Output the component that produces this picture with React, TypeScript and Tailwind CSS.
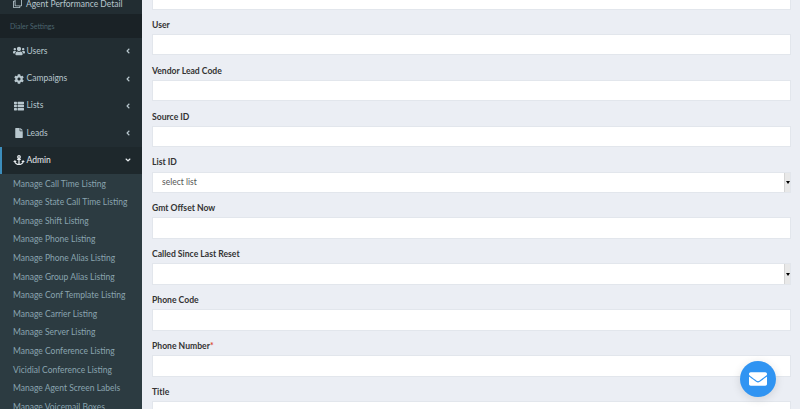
import { FaAngleDown, FaAngleLeft, FaAnchor, FaCog, FaEnvelope, FaFile, FaRegClone, FaThList, FaUsers } from "react-icons/fa";

const menus = [
  { title: "Users", icon: FaUsers },
  { title: "Campaigns", icon: FaCog },
  { title: "Lists", icon: FaThList },
  { title: "Leads", icon: FaFile },
];

const adminLinks = [
  "Manage Call Time Listing",
  "Manage State Call Time Listing",
  "Manage Shift Listing",
  "Manage Phone Listing",
  "Manage Phone Alias Listing",
  "Manage Group Alias Listing",
  "Manage Conf Template Listing",
  "Manage Carrier Listing",
  "Manage Server Listing",
  "Manage Conference Listing",
  "Vicidial Conference Listing",
  "Manage Agent Screen Labels",
  "Manage Voicemail Boxes",
];

const fields = [
  { label: "User" },
  { label: "Vendor Lead Code" },
  { label: "Source ID" },
  { label: "List ID", select: "select list" },
  { label: "Gmt Offset Now" },
  { label: "Called Since Last Reset", select: " " },
  { label: "Phone Code" },
  { label: "Phone Number", required: true },
  { label: "Title" },
];

function Sidebar() {
  return (
    <aside className="w-[142px] shrink-0 bg-[#222d32] h-[409px] overflow-hidden text-[8.5px]">
      <div className="h-[14px] flex items-end pl-[13px] pb-[6px] gap-[4px] text-[#b8c7ce] overflow-hidden">
        <FaRegClone className="text-[9px] shrink-0" />
        <span className="whitespace-nowrap leading-none">Agent Performance Detail</span>
      </div>
      <div className="h-[23.6px] bg-[#1a2226] flex items-center pl-[10px] text-[7px] text-[#4b646f]">Dialer Settings</div>
      {menus.map((m) => (
        <div key={m.title} className="h-[27.3px] flex items-center pl-[13px] pr-[10px] text-[#b8c7ce]">
          <m.icon className="text-[10px] w-[12px] shrink-0" />
          <span className="ml-[1.5px] flex-1">{m.title}</span>
          <FaAngleLeft className="text-[8px]" />
        </div>
      ))}
      <div className="h-[27px] flex items-center pl-[11px] pr-[10px] bg-[#1e282c] border-l-2 border-[#3c8dbc] text-[#e8edf0]">
        <FaAnchor className="text-[10px] w-[12px] shrink-0" />
        <span className="ml-[1.5px] flex-1">Admin</span>
        <FaAngleDown className="text-[8px]" />
      </div>
      <ul className="bg-[#2c3b41] pt-[1px]">
        {adminLinks.map((l) => (
          <li key={l} className="h-[18.6px] pl-[13px] flex items-center text-[#8aa4af] whitespace-nowrap">{l}</li>
        ))}
      </ul>
    </aside>
  );
}

function Field({ label, select, required }: { label: string; select?: string; required?: boolean }) {
  return (
    <div className="h-[45.9px]">
      <div className="h-[24.4px] pt-[7px] flex items-center text-[8.6px] font-bold text-[#333]">
        {label}
        {required && <span className="text-[#dd4b39]">*</span>}
      </div>
      {select ? (
        <div className="h-[21.5px] border border-[#e2e6ec] bg-white flex items-center pl-[9px] text-[8.5px] text-[#555] relative">
          {select}
          <div className="absolute right-0 top-0 bottom-0 w-[6px] bg-[#e8e8e8] border-l border-[#d5d5d5] flex items-center justify-center">
            <div className="w-0 h-0 border-l-[2px] border-r-[2px] border-t-[3px] border-l-transparent border-r-transparent border-t-black" />
          </div>
        </div>
      ) : (
        <div className="h-[21.5px] border border-[#e2e6ec] bg-white" />
      )}
    </div>
  );
}

export default function App() {
  return (
    <div className="relative h-[409px] w-[800px] overflow-hidden flex bg-[#ebeef4]" style={{ fontFamily: 'Lato, sans-serif' }}>
      <Sidebar />
      <main className="flex-1 pl-[10px] pr-[9px] overflow-hidden">
        <div className="h-[9.5px] border border-t-0 border-[#e2e6ec] bg-white" />
        {fields.map((f) => (
          <Field key={f.label} {...f} />
        ))}
      </main>
      <button className="absolute left-[740px] top-[361px] w-[36px] h-[36px] rounded-full bg-[#3094f2] flex items-center justify-center text-white shadow-[0_2px_10px_rgba(0,0,0,0.12)]">
        <FaEnvelope className="text-[18px]" />
      </button>
    </div>
  );
}
